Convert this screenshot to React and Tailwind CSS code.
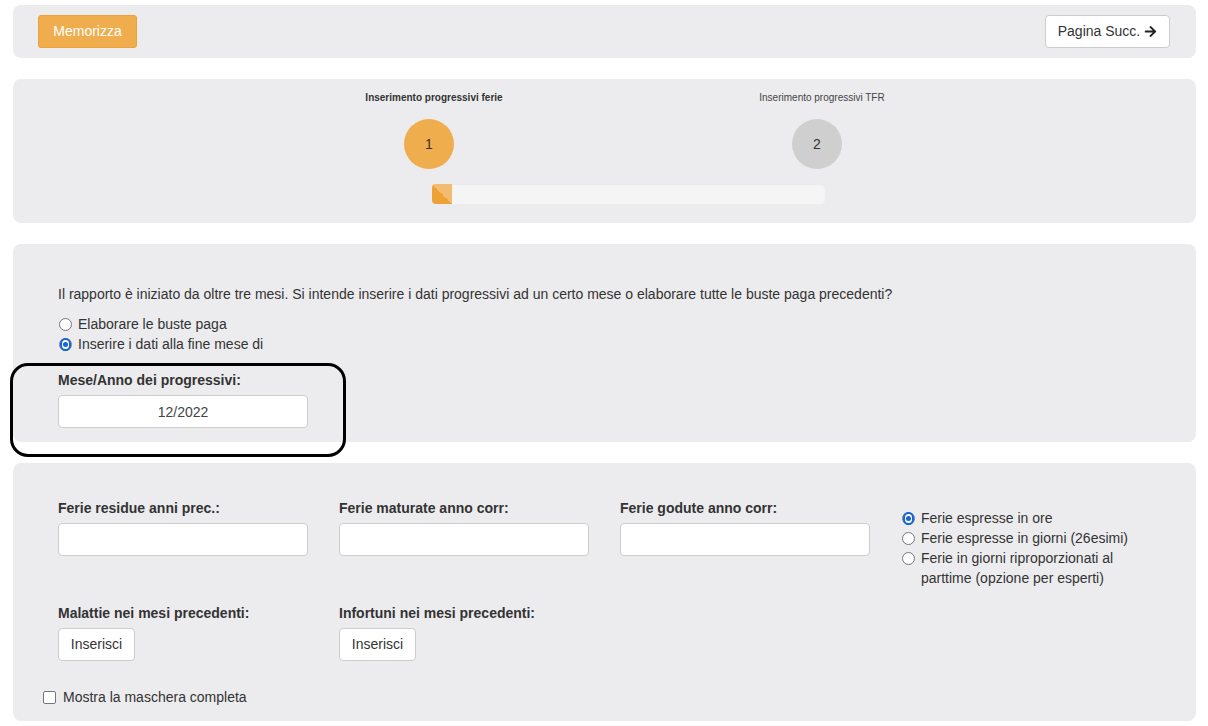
import React from "react";
import { FaArrowRight } from "react-icons/fa";

function Radio({ checked, children }) {
  return (
    <label className="flex items-start h-[20px] leading-[20px]">
      <span className="mt-[4px] ml-[1px] w-[13px] h-[13px] shrink-0 rounded-full bg-white flex items-center justify-center border border-[#767676]">
        {checked && (
          <span className="w-[13px] h-[13px] rounded-full border-[2px] border-[#1565d8] bg-white flex items-center justify-center">
            <span className="w-[5px] h-[5px] rounded-full bg-[#1565d8]" />
          </span>
        )}
      </span>
      <span className="ml-[6px] whitespace-nowrap">{children}</span>
    </label>
  );
}

function Field({ label, value }) {
  return (
    <div className="flex flex-col">
      <div className="font-bold leading-[20px]">{label}</div>
      <input
        readOnly
        value={value || ""}
        className="mt-[5px] w-[250px] h-[33px] bg-white border border-[#ccc] rounded-[4px] text-center text-[14px] text-[#444] outline-none"
      />
    </div>
  );
}

function Step({ n, label, active }) {
  return (
    <div className="w-[388px] flex flex-col items-center">
      <div className={"pl-[10px] text-[10px] leading-[13px] " + (active ? "font-bold text-[#333]" : "text-[#444]")}>
        {label}
      </div>
      <div
        className={
          "mt-[15px] w-[50px] h-[50px] rounded-full flex items-center justify-center text-[14px] text-[#333] " +
          (active ? "bg-[#f0ad4e]" : "bg-[#cfcfcf]")
        }
      >
        {n}
      </div>
    </div>
  );
}

export default function App() {
  return (
    <div className="min-h-screen bg-white text-[14px] text-[#333] font-['Liberation_Sans',Arial,sans-serif] pt-[5px] pb-[5px]">
      {/* toolbar */}
      <div className="ml-[13px] w-[1183px] h-[53px] bg-[#ececee] rounded-lg flex items-center justify-between pl-[25px] pr-[26px]">
        <button className="h-[33px] w-[99px] bg-[#f0ad4e] border border-[#eea236] rounded-[3px] text-white">
          Memorizza
        </button>
        <button className="h-[33px] w-[125px] bg-white border border-[#ccc] rounded-[4px] flex items-center justify-center gap-[4px] text-[#333]">
          Pagina Succ.
          <FaArrowRight className="text-[13px] text-[#222]" />
        </button>
      </div>

      {/* steps */}
      <div className="ml-[13px] mt-[21px] w-[1183px] h-[144px] bg-[#ececee] rounded-lg pt-[12px] pl-[222px]">
        <div className="flex">
          <Step n="1" label="Inserimento progressivi ferie" active />
          <Step n="2" label="Inserimento progressivi TFR" />
        </div>
        <div className="mt-[15px] ml-[197px] w-[393px] h-[20px] bg-[#f5f5f5] rounded-[4px] overflow-hidden shadow-[inset_0_1px_2px_rgba(0,0,0,0.06)]">
          <div className="w-[20px] h-full bg-[linear-gradient(45deg,#eea236_50%,#f3bb6f_50%)]" />
        </div>
      </div>

      {/* periodo */}
      <div className="relative ml-[13px] mt-[21px] w-[1183px] h-[198px] bg-[#ececee] rounded-lg pt-[40px] pl-[45px]">
        <div className="leading-[20px]">
          Il rapporto è iniziato da oltre tre mesi. Si intende inserire i dati progressivi ad un certo mese o elaborare tutte le buste paga precedenti?
        </div>
        <div className="mt-[10px]">
          <Radio>Elaborare le buste paga</Radio>
          <Radio checked>Inserire i dati alla fine mese di</Radio>
        </div>
        <div className="mt-[16px]">
          <Field label="Mese/Anno dei progressivi:" value="12/2022" />
        </div>
        <div className="absolute left-[-3px] top-[119px] w-[336px] h-[94px] border-[3px] border-black rounded-[18px] pointer-events-none" />
      </div>

      {/* ferie */}
      <div className="ml-[13px] mt-[21px] w-[1183px] h-[258px] bg-[#ececee] rounded-lg pt-[35px] pl-[45px]">
        <div className="grid grid-cols-[281px_281px_281px_281px] h-[105px]">
          <Field label="Ferie residue anni prec.:" />
          <Field label="Ferie maturate anno corr:" />
          <Field label="Ferie godute anno corr:" />
          <div className="pt-[10px]">
            <Radio checked>Ferie espresse in ore</Radio>
            <Radio>Ferie espresse in giorni (26esimi)</Radio>
            <Radio>Ferie in giorni riproporzionati al</Radio>
            <div className="pl-[20px] leading-[20px] whitespace-nowrap">parttime (opzione per esperti)</div>
          </div>
        </div>
        <div className="grid grid-cols-[281px_281px]">
          <div>
            <div className="font-bold leading-[20px]">Malattie nei mesi precedenti:</div>
            <button className="mt-[5px] h-[33px] w-[77px] bg-white border border-[#ccc] rounded-[4px] text-[#333]">
              Inserisci
            </button>
          </div>
          <div>
            <div className="font-bold leading-[20px]">Infortuni nei mesi precedenti:</div>
            <button className="mt-[5px] h-[33px] w-[77px] bg-white border border-[#ccc] rounded-[4px] text-[#333]">
              Inserisci
            </button>
          </div>
        </div>
        <label className="mt-[26px] -ml-[15px] flex items-center h-[20px]">
          <span className="w-[13px] h-[13px] bg-white border border-[#767676] rounded-[2px]" />
          <span className="ml-[7px]">Mostra la maschera completa</span>
        </label>
      </div>
    </div>
  );
}
